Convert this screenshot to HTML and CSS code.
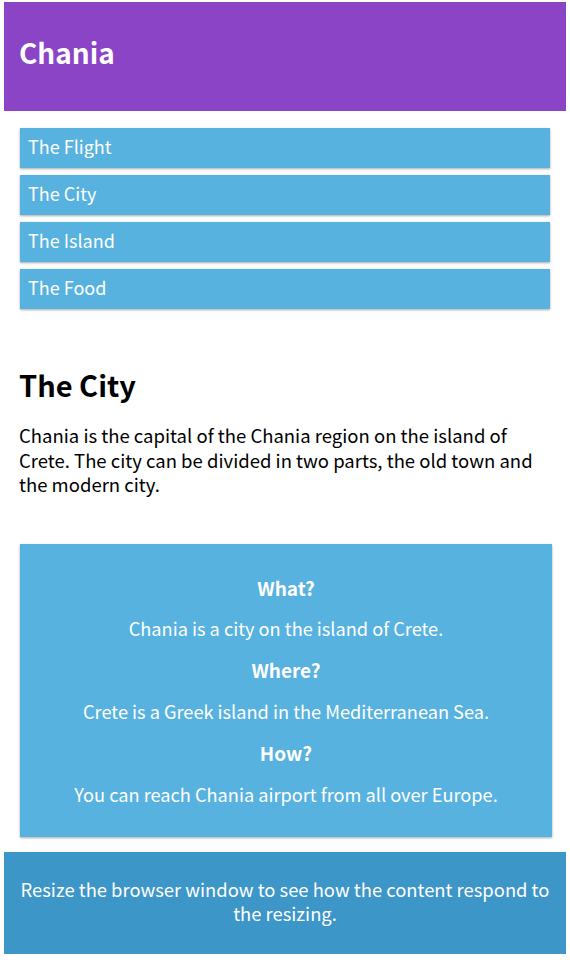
FILE: index.html
```html
<!DOCTYPE html>
<html lang="en">
<head>
<meta charset="utf-8">
<title>Chania</title>
<link rel="stylesheet" href="styles.css">
</head>
<body>
<header class="header">
  <h1 class="header-title">Chania</h1>
</header>
<nav class="menu">
  <ul class="menu-list">
    <li class="menu-item">The Flight</li>
    <li class="menu-item">The City</li>
    <li class="menu-item">The Island</li>
    <li class="menu-item">The Food</li>
  </ul>
</nav>
<main class="main">
  <h1 class="main-title">The City</h1>
  <p class="main-text">Chania is the capital of the Chania region on the island of Crete. The city can be divided in two parts, the old town and the modern city.</p>
</main>
<aside class="aside">
  <h2 class="aside-head">What?</h2>
  <p class="aside-text">Chania is a city on the island of Crete.</p>
  <h2 class="aside-head">Where?</h2>
  <p class="aside-text">Crete is a Greek island in the Mediterranean Sea.</p>
  <h2 class="aside-head">How?</h2>
  <p class="aside-text">You can reach Chania airport from all over Europe.</p>
</aside>
<footer class="footer">
  <p class="footer-text">Resize the browser window to see how the content respond to the resizing.</p>
</footer>
</body>
</html>
```

FILE: styles.css
```css
* { box-sizing: border-box; }
html, body { background: #ffffff; }
body {
  margin: 2px 4px;
  font-family: "Noto Sans CJK KR", "Noto Sans", sans-serif;
  color: #000;
}
.header {
  background-color: #8b44c6;
  color: #ffffff;
  padding: 28px 15px 37px;
}
.header-title {
  margin: 0;
  font-size: 28px;
  line-height: 44px;
  font-weight: 700;
}
.menu { padding: 17px 16px 0; }
.menu-list { list-style: none; margin: 0; padding: 0; }
.menu-item {
  height: 40px;
  padding: 0 8px;
  margin-bottom: 7px;
  background-color: #58b2e0;
  color: #ffffff;
  font-size: 18px;
  line-height: 36px;
  box-shadow: 0 1px 3px rgba(0,0,0,0.12), 0 1px 2px rgba(0,0,0,0.24);
}
.main { padding: 50px 15px 0; }
.main-title {
  margin: 0 0 21px;
  font-size: 29px;
  line-height: 36px;
  font-weight: 700;
}
.main-text {
  margin: 0;
  font-size: 18.5px;
  line-height: 24.5px;
}
.aside {
  margin: 47px 14px 0 16px;
  padding: 23px 15px 22px;
  background-color: #58b2e0;
  color: #ffffff;
  text-align: center;
  box-shadow: 0 1px 3px rgba(0,0,0,0.12), 0 1px 2px rgba(0,0,0,0.24);
}
.aside-head {
  margin: 0;
  font-size: 19px;
  font-weight: 700;
  line-height: 41.4px;
}
.aside-text {
  margin: 0;
  font-size: 18.2px;
  line-height: 41.4px;
}
.footer {
  margin-top: 15px;
  padding: 25px 8px 29px;
  background-color: #3d96c8;
  color: #ffffff;
  text-align: center;
}
.footer-text {
  margin: 0;
  font-size: 18.4px;
  line-height: 24px;
}
```
